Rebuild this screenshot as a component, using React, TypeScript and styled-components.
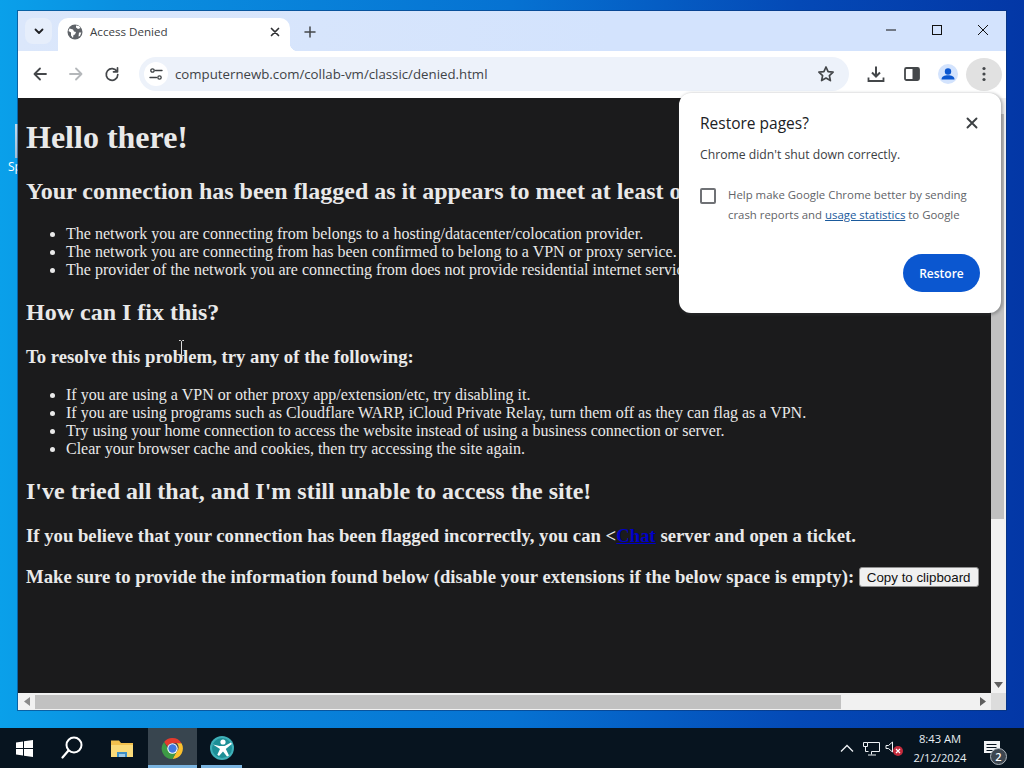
import React from "react";
import styled, { createGlobalStyle } from "styled-components";

const Global = createGlobalStyle`
  html, body { margin: 0; padding: 0; height: 100%; overflow: hidden; }
  #root { height: 100%; }
`;
const UI = `"Open Sans", "Noto Sans", "Liberation Sans", sans-serif`;

const Desktop = styled.div`
  width: 1024px; height: 768px; display: flex; flex-direction: column; overflow: hidden;
  background: linear-gradient(90deg, #0aa0ea 0%, #0a8fe0 12%, #0672d2 50%, #0449b6 78%, #0337a6 100%);
`;
const Workspace = styled.div`flex: 1; position: relative;`;
const DesktopIcon = styled.div`
  position: absolute; left: 8px; top: 120px; width: 10px; height: 54px; overflow: hidden;
  color: #fff; font: 12px ${UI};
`;
const IconSliver = styled.div`width: 3px; height: 34px; margin-left: 7px; margin-top: 4px; background: linear-gradient(#dfe6ee, #b9c6d6); opacity: .85;`;
const IconLabel = styled.div`margin-top: 2px; line-height: 14px; white-space: nowrap;`;

const Browser = styled.div`
  position: absolute; left: 18px; top: 11px; width: 988px; height: 699px;
  display: flex; flex-direction: column; background: #fff;
  box-shadow: 0 0 0 1px rgba(10, 50, 110, .55);
`;
const TabStrip = styled.div`
  height: 40px; flex: none; display: flex; align-items: flex-end;
  background: linear-gradient(90deg, #dbe7fb, #d3e3fd 60%);
  padding-left: 7px;
`;
const TabSearch = styled.div`
  width: 27px; height: 26px; border-radius: 8px; margin-bottom: 7px; background: #e6eefb;
  display: flex; align-items: center; justify-content: center;
`;
const Tab = styled.div`
  width: 232px; height: 33px; margin-left: 6px; background: #fff; border-radius: 10px 10px 0 0;
  display: flex; align-items: center; padding: 0 9px 6px; box-sizing: border-box; position: relative;
  &::after {
    content: ""; position: absolute; right: -8px; bottom: 0; width: 8px; height: 8px;
    background: radial-gradient(circle at 100% 0, transparent 8px, #fff 8.5px);
  }
`;
const TabTitle = styled.span`
  flex: 1; margin-left: 7px; font: 11.6px ${UI}; color: #3c4043; white-space: nowrap;
`;
const NewTab = styled.div`width: 40px; height: 33px; padding-bottom: 6px; box-sizing: border-box; display: flex; align-items: center; justify-content: center;`;
const Spacer = styled.div`flex: 1;`;
const WinControls = styled.div`display: flex; align-self: flex-start;`;
const WinBtn = styled.div`width: 46px; height: 38px; display: flex; align-items: center; justify-content: center;`;

const Toolbar = styled.div`
  height: 47px; flex: none; display: flex; align-items: center; padding: 0 4px 1px 4px; background: #fff;
  box-sizing: border-box;
`;
const ToolBtn = styled.div<{ $active?: boolean }>`
  width: 36px; height: 33px; flex: none; display: flex; align-items: center; justify-content: center;
  border-radius: 50%;
  background: ${p => (p.$active ? "#e1e1e1" : "transparent")};
`;
const Omnibox = styled.div`
  flex: 1; height: 34px; margin: 0 9px; background: #edf2fa; border-radius: 17px;
  display: flex; align-items: center; padding: 0 5px;
`;
const SiteChip = styled.div`
  width: 24px; height: 24px; border-radius: 50%; background: #fff; flex: none;
  display: flex; align-items: center; justify-content: center;
`;
const Url = styled.span`flex: 1; margin-left: 7px; font: 13.25px ${UI}; color: #3f4347; white-space: nowrap;`;

const Viewport = styled.div`flex: 1; min-height: 0; display: flex;`;
const Page = styled.div`
  flex: 1; min-width: 0; overflow: hidden; background: #1b1b1c; color: #e9e9e9; position: relative;
  font-family: "Liberation Serif", serif; font-size: 16px;
`;
const PageInner = styled.div`
  width: 1135px; padding: 21.44px 8px 0; box-sizing: border-box; white-space: nowrap;
`;
const H1 = styled.h1`font-size: 32px; margin: 0 0 21.44px;`;
const H2 = styled.h2`font-size: 24px; margin: 19.92px 0;`;
const H3 = styled.h3`font-size: 18.72px; margin: 18.72px 0;`;
const List = styled.ul`margin: 16px 0; padding-left: 40px;`;
const ChatLink = styled.a`color: #0000c8; text-decoration: underline;`;
const CopyButton = styled.button`
  font: 13.33px "Liberation Sans", Arial, sans-serif; color: #111; background: #f0f0f0;
  border: 1px solid #8f8f8f; border-radius: 3px; padding: 1px 7px; height: 20px; margin-left: 0;
  vertical-align: 1px;
`;
const Cursor = styled.svg`position: absolute; left: 160px; top: 242px;`;

const VBar = styled.div`width: 15px; flex: none; background: #f1f1f1; display: flex; flex-direction: column;`;
const VArrow = styled.div`height: 16px; flex: none; display: flex; align-items: center; justify-content: center;`;
const VTrack = styled.div`flex: 1; min-height: 0;`;
const VThumb = styled.div`height: 405px; background: #c1c1c1; margin: 0 2px 0 0;`;

const HBar = styled.div`height: 17px; flex: none; background: #f1f1f1; display: flex;`;
const HArrow = styled.div`width: 17px; flex: none; display: flex; align-items: center; justify-content: center;`;
const HTrack = styled.div`flex: 1; display: flex; align-items: center;`;
const HThumb = styled.div`width: 806px; height: 14px; background: #c1c1c1;`;
const Corner = styled.div`width: 15px; flex: none; background: #dcdcdc;`;

const Bubble = styled.div`
  position: absolute; left: 661px; top: 82px; width: 322px; height: 220px; box-sizing: border-box;
  background: #fff; border-radius: 12px; padding: 19px 21px 0;
  box-shadow: 1px 1px 3px 1px rgba(60, 64, 67, .35);
  font-family: ${UI};
`;
const BubbleHead = styled.div`display: flex; align-items: center; justify-content: space-between; height: 22px;`;
const BubbleTitle = styled.div`font-size: 15.5px; font-weight: 500; color: #202124;`;
const CloseBtn = styled.div`width: 16px; height: 16px; display: flex; align-items: center; justify-content: center;`;
const BubbleText = styled.div`font-size: 12.2px; color: #3c4043; margin-top: 13px; line-height: 16px;`;
const ConsentRow = styled.div`display: flex; margin-top: 23px;`;
const Box = styled.div`
  width: 12px; height: 12px; border: 2px solid #6f7175; border-radius: 2px; flex: none; margin-top: 2px;
`;
const ConsentText = styled.div`margin-left: 12px; font-size: 11.4px; line-height: 20px; color: #5f6368; margin-top: -1px; white-space: nowrap;`;
const Usage = styled.a`color: #1a5a9c; text-decoration: underline;`;
const BubbleFoot = styled.div`display: flex; justify-content: flex-end; margin-top: 29px;`;
const RestoreBtn = styled.div`
  width: 77px; height: 38px; border-radius: 19px; background: #0b57d0; color: #fff;
  font-size: 12px; font-weight: 600; display: flex; align-items: center; justify-content: center;
`;

const Taskbar = styled.div`
  height: 40px; flex: none; background: #07141f; display: flex; align-items: stretch;
`;
const TaskItem = styled.div<{ $w: number; $active?: boolean; $open?: boolean }>`
  width: ${p => p.$w}px; flex: none; display: flex; align-items: center; justify-content: center; position: relative;
  background: ${p => (p.$active ? "#38454f" : "transparent")};
  ${p => p.$open && `&::after { content: ""; position: absolute; left: ${p.$active ? 0 : 4}px; right: ${p.$active ? 0 : 4}px; bottom: 0; height: 3px; background: #7ab4e0; }`}
`;
const Tray = styled.div`display: flex; align-items: center; margin-left: auto; height: 100%; padding-right: 13px;`;
const TrayIcon = styled.div`width: 24px; display: flex; align-items: center; justify-content: center;`;
const Clock = styled.div`
  width: 58px; margin: 0 4px; text-align: center; color: #e8eef2; font: 11.2px/19px ${UI};
`;
const Notif = styled.div`width: 38px; display: flex; align-items: center; justify-content: center; position: relative;`;
const NotifBadge = styled.div`
  position: absolute; left: 17px; top: 7px; width: 15px; height: 15px; border-radius: 50%;
  border: 1px solid #aeb6bd; background: #3d4650; color: #fff; font: 600 11px/15px ${UI}; text-align: center;
`;

const stroke = { fill: "none", strokeLinecap: "round", strokeLinejoin: "round" } as const;

const ChromeLogo = () => (
  <svg width="25" height="25" viewBox="0 0 48 48">
    <path d="M24 4a20 20 0 0 1 17.32 10H24a10 10 0 0 0-9.4 6.6L7.8 11.4A20 20 0 0 1 24 4z" fill="#e33b2e" />
    <path d="M41.32 14A20 20 0 0 1 24 44l8.66-15a10 10 0 0 0-.66-15z" fill="#fbc02d" />
    <path d="M24 44A20 20 0 0 1 7.8 11.4L16 25.5a10 10 0 0 0 16.66 3.5z" fill="#3d9a46" />
    <circle cx="24" cy="24" r="10" fill="#fff" />
    <circle cx="24" cy="24" r="8" fill="#3f78e0" />
  </svg>
);

export default function App() {
  return (
    <Desktop>
      <Global />
      <Workspace>
        <DesktopIcon>
          <IconSliver />
          <IconLabel>Sp</IconLabel>
        </DesktopIcon>
        <Browser>
          <TabStrip>
            <TabSearch>
              <svg width="12" height="12" viewBox="0 0 12 12"><path d="M2.5 4.5 6 8l3.500-3.500" stroke="#202124" strokeWidth="1.800" {...stroke} /></svg>
            </TabSearch>
            <Tab>
              <svg width="16" height="16" viewBox="0 0 16 16">
                <circle cx="8" cy="8" r="7.500" fill="#5f6368" />
                <path d="M2.500 4.500 6 5.500l1 2 2 .5-1 2.500-1.500.5-.5 3-2-2.500V8.500L1.500 7zM9 1.500l3 .5 1.500 2-2.500 1-2-1.500zM12 8.500h2.300L13 12l-1.500.5z" fill="#fff" />
              </svg>
              <TabTitle>Access Denied</TabTitle>
              <svg width="12" height="12" viewBox="0 0 12 12"><path d="M2.500 2.500l7 7M9.500 2.500l-7 7" stroke="#303134" strokeWidth="1.700" {...stroke} /></svg>
            </Tab>
            <NewTab>
              <svg width="14" height="14" viewBox="0 0 14 14"><path d="M7 2v10M2 7h10" stroke="#44474a" strokeWidth="1.500" {...stroke} /></svg>
            </NewTab>
            <Spacer />
            <WinControls>
              <WinBtn><svg width="12" height="12" viewBox="0 0 12 12"><path d="M1 6h10" stroke="#111" strokeWidth="1" /></svg></WinBtn>
              <WinBtn><svg width="12" height="12" viewBox="0 0 12 12"><rect x="1.500" y="1.500" width="9" height="9" fill="none" stroke="#111" strokeWidth="1" /></svg></WinBtn>
              <WinBtn><svg width="12" height="12" viewBox="0 0 12 12"><path d="M1 1l10 10M11 1 1 11" stroke="#111" strokeWidth="1" /></svg></WinBtn>
            </WinControls>
          </TabStrip>
          <Toolbar>
            <ToolBtn>
              <svg width="16" height="16" viewBox="0 0 16 16"><path d="M14 8H2.500M8 2.500 2.500 8 8 13.500" stroke="#44474a" strokeWidth="1.800" {...stroke} /></svg>
            </ToolBtn>
            <ToolBtn>
              <svg width="16" height="16" viewBox="0 0 16 16"><path d="M2 8h11.500M8 2.500 13.500 8 8 13.500" stroke="#b4b7ba" strokeWidth="1.800" {...stroke} /></svg>
            </ToolBtn>
            <ToolBtn>
              <svg width="16" height="16" viewBox="0 0 16 16"><path d="M13 5.500A5.800 5.800 0 1 0 13.800 8.500M13.500 1.800v4h-4" stroke="#44474a" strokeWidth="1.700" {...stroke} /></svg>
            </ToolBtn>
            <Omnibox>
              <SiteChip>
                <svg width="14" height="14" viewBox="0 0 14 14">
                  <circle cx="3.500" cy="3.500" r="1.700" fill="none" stroke="#3c4043" strokeWidth="1.300" />
                  <path d="M6.500 3.500H13M1 10.500h6.500" stroke="#3c4043" strokeWidth="1.400" {...stroke} />
                  <circle cx="10.500" cy="10.500" r="1.700" fill="none" stroke="#3c4043" strokeWidth="1.300" />
                </svg>
              </SiteChip>
              <Url>computernewb.com/collab-vm/classic/denied.html</Url>
              <ToolBtn>
                <svg width="18" height="18" viewBox="0 0 18 18"><path d="M9 2l2.100 4.600 5 .6-3.700 3.400 1 5L9 13.100 4.600 15.600l1-5L1.900 7.200l5-.6z" fill="none" stroke="#44474a" strokeWidth="1.700" strokeLinejoin="round" /></svg>
              </ToolBtn>
            </Omnibox>
            <ToolBtn>
              <svg width="18" height="18" viewBox="0 0 18 18"><path d="M9 1.500v9.500M5 7.500l4 4 4-4" stroke="#44474a" strokeWidth="2" fill="none" /><path d="M1.500 12.500v3.500h15v-3.500" stroke="#44474a" strokeWidth="1.800" fill="none" /></svg>
            </ToolBtn>
            <ToolBtn>
              <svg width="16" height="16" viewBox="0 0 16 16"><rect x="1" y="2" width="14" height="12" rx="1.500" fill="none" stroke="#44474a" strokeWidth="1.800" /><rect x="8.500" y="2" width="6.500" height="12" fill="#44474a" /></svg>
            </ToolBtn>
            <ToolBtn>
              <svg width="20" height="20" viewBox="0 0 20 20">
                <circle cx="10" cy="10" r="10" fill="#d3e3fd" />
                <circle cx="10" cy="7.500" r="3.200" fill="#0b57d0" />
                <path d="M3.500 15.500c0-3 3-4.300 6.500-4.300s6.500 1.300 6.500 4.300z" fill="#0b57d0" />
              </svg>
            </ToolBtn>
            <ToolBtn $active>
              <svg width="4" height="16" viewBox="0 0 4 16"><circle cx="2" cy="2.500" r="1.600" fill="#44474a" /><circle cx="2" cy="8" r="1.600" fill="#44474a" /><circle cx="2" cy="13.500" r="1.600" fill="#44474a" /></svg>
            </ToolBtn>
          </Toolbar>
          <Viewport>
            <Page>
              <PageInner>
                <H1>Hello there!</H1>
                <H2>Your connection has been flagged as it appears to meet at least one of the following criteria:</H2>
                <List>
                  <li>The network you are connecting from belongs to a hosting/datacenter/colocation provider.</li>
                  <li>The network you are connecting from has been confirmed to belong to a VPN or proxy service.</li>
                  <li>The provider of the network you are connecting from does not provide residential internet service.</li>
                </List>
                <H2>How can I fix this?</H2>
                <H3>To resolve this problem, try any of the following:</H3>
                <List>
                  <li>If you are using a VPN or other proxy app/extension/etc, try disabling it.</li>
                  <li>If you are using programs such as Cloudflare WARP, iCloud Private Relay, turn them off as they can flag as a VPN.</li>
                  <li>Try using your home connection to access the website instead of using a business connection or server.</li>
                  <li>Clear your browser cache and cookies, then try accessing the site again.</li>
                </List>
                <H2>I've tried all that, and I'm still unable to access the site!</H2>
                <H3>If you believe that your connection has been flagged incorrectly, you can &lt;<ChatLink>Chat</ChatLink> server and open a ticket.</H3>
                <H3>Make sure to provide the information found below (disable your extensions if the below space is empty): <CopyButton>Copy to clipboard</CopyButton></H3>
              </PageInner>
              <Cursor width="7" height="16" viewBox="0 0 7 16"><path d="M1 .5h1.500l1 1 1-1H6M3.500 1.500v13M1 15.500h1.500l1-1 1 1H6" fill="none" stroke="#ddd" strokeWidth="1" /></Cursor>
            </Page>
            <VBar>
              <VArrow />
              <VTrack><VThumb /></VTrack>
              <VArrow>
                <svg width="9" height="6" viewBox="0 0 9 6"><path d="M0 0h9L4.500 6z" fill="#5f5f5f" /></svg>
              </VArrow>
            </VBar>
          </Viewport>
          <HBar>
            <HArrow><svg width="6" height="9" viewBox="0 0 6 9"><path d="M6 0v9L0 4.500z" fill="#8a8a8a" /></svg></HArrow>
            <HTrack><HThumb /></HTrack>
            <HArrow><svg width="6" height="9" viewBox="0 0 6 9"><path d="M0 0v9l6-4.500z" fill="#5f5f5f" /></svg></HArrow>
            <Corner />
          </HBar>
          <Bubble>
            <BubbleHead>
              <BubbleTitle>Restore pages?</BubbleTitle>
              <CloseBtn>
                <svg width="12" height="12" viewBox="0 0 12 12"><path d="M1.500 1.500l9 9M10.500 1.500l-9 9" stroke="#3c4043" strokeWidth="1.900" {...stroke} /></svg>
              </CloseBtn>
            </BubbleHead>
            <BubbleText>Chrome didn't shut down correctly.</BubbleText>
            <ConsentRow>
              <Box />
              <ConsentText>
                Help make Google Chrome better by sending<br />
                crash reports and <Usage>usage statistics</Usage> to Google
              </ConsentText>
            </ConsentRow>
            <BubbleFoot><RestoreBtn>Restore</RestoreBtn></BubbleFoot>
          </Bubble>
        </Browser>
      </Workspace>
      <Taskbar>
        <TaskItem $w={48}>
          <svg width="17" height="17" viewBox="0 0 17 17"><path d="M0 2.400 7 1.400V8H0zM8 1.200 17 0v8H8zM0 9h7v6.600l-7-1zM8 9h9v8l-9-1.200z" fill="#fff" /></svg>
        </TaskItem>
        <TaskItem $w={48}>
          <svg width="22" height="24" viewBox="0 0 22 24"><circle cx="13" cy="9" r="7.500" fill="none" stroke="#fff" strokeWidth="2" /><path d="M7.500 14.500 1.500 21.500" stroke="#fff" strokeWidth="2.200" strokeLinecap="round" /></svg>
        </TaskItem>
        <TaskItem $w={52}>
          <svg width="22" height="19" viewBox="0 0 22 19">
            <path d="M0 1.500h8l2 2.500h12v14H0z" fill="#f2c14e" />
            <path d="M0 6h22v12H0z" fill="#fadb7a" />
            <path d="M6 18v-5h10v5h-2v-3H8v3z" fill="#3d8fc7" />
            <path d="M8 18v-3h6v3z" fill="#9fc9e4" />
          </svg>
        </TaskItem>
        <TaskItem $w={49} $active $open><ChromeLogo /></TaskItem>
        <TaskItem $w={49} $open>
          <svg width="24" height="24" viewBox="0 0 24 24">
            <circle cx="12" cy="12" r="12" fill="#3fb0b8" />
            <circle cx="12" cy="12" r="10" fill="#1d8f96" />
            <circle cx="13" cy="6" r="2.600" fill="#fff" />
            <path d="M3 8.500 9.500 10h5l6.500-3.500.8 1.500-6 5 3.200 6.500-2 1-4-5-4 4.500-1.700-1.300L10 13z" fill="#fff" />
          </svg>
        </TaskItem>
        <Tray>
          <TrayIcon>
            <svg width="14" height="8" viewBox="0 0 14 8"><path d="M1 7.500l6-6 6 6" fill="none" stroke="#eef2f5" strokeWidth="1.300" /></svg>
          </TrayIcon>
          <TrayIcon>
            <svg width="17" height="15" viewBox="0 0 17 15" fill="none" stroke="#eef2f5" strokeWidth="1">
              <path d="M4.500 1.500h12v9h-8M8.500 10.500v3M5 14h8M.5 1.500h4v4h-4zM2.500 5.500v5h3" />
            </svg>
          </TrayIcon>
          <TrayIcon>
            <svg width="20" height="16" viewBox="0 0 20 16">
              <path d="M1 5.500h2.500L7.500 2v10L3.500 8.500H1z" fill="none" stroke="#eef2f5" strokeWidth="1" />
              <circle cx="13" cy="11" r="5" fill="#c42b3c" />
              <path d="M11 9l4 4M15 9l-4 4" stroke="#fff" strokeWidth="1.200" />
            </svg>
          </TrayIcon>
          <Clock>8:43 AM<br />2/12/2024</Clock>
          <Notif>
            <svg width="16" height="15" viewBox="0 0 16 15"><path d="M0 0h16v12h-5l-3 3v-3H0z" fill="#f2f4f6" /><path d="M2.500 3.500h10M2.500 6.500h10M2.500 9.500h6" stroke="#07141f" strokeWidth="1" /></svg>
            <NotifBadge>2</NotifBadge>
          </Notif>
        </Tray>
      </Taskbar>
    </Desktop>
  );
}
